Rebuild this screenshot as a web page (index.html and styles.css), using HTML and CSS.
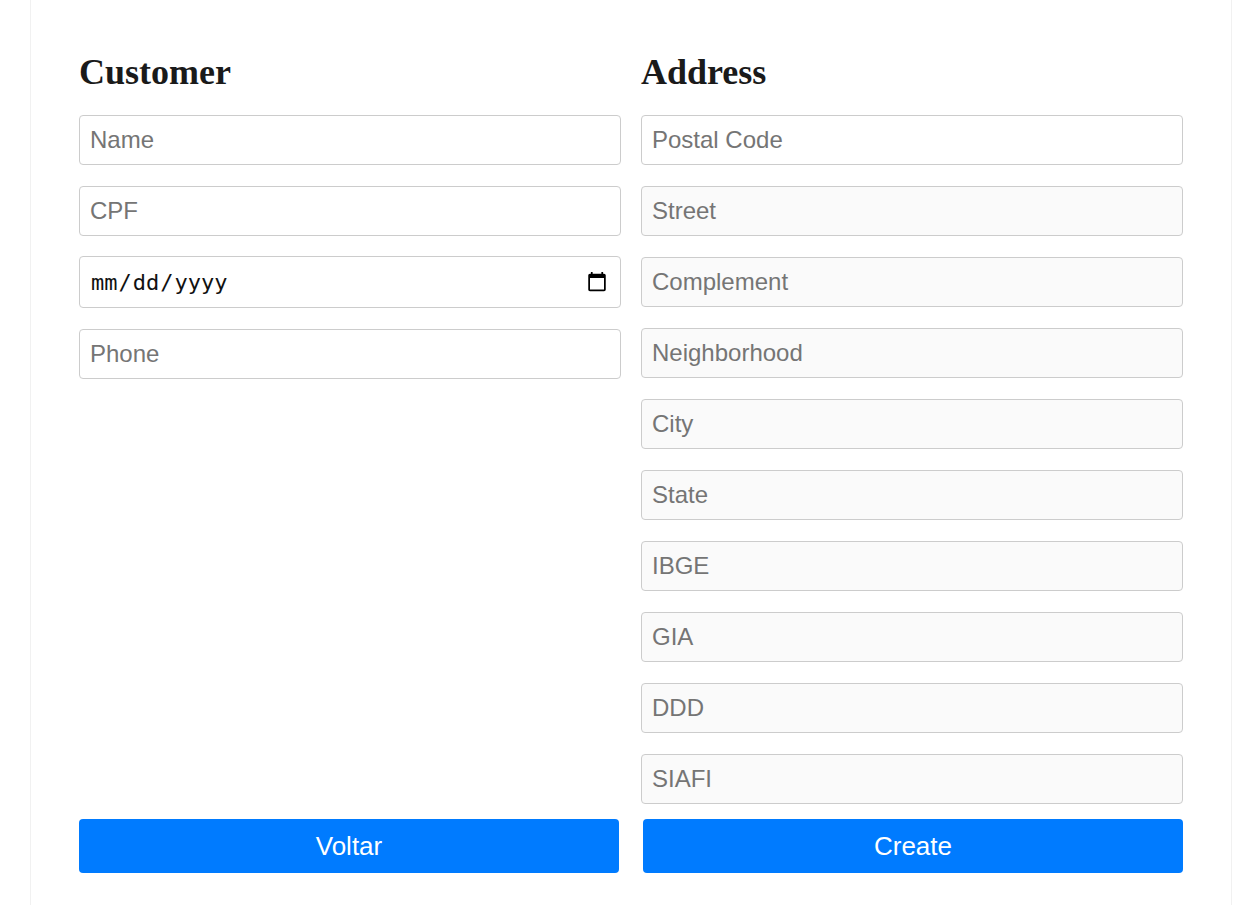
FILE: index.html
```html
<!DOCTYPE html>
<html lang="en">
<head>
<meta charset="utf-8">
<title>Create Customer</title>
<link rel="stylesheet" href="styles.css">
</head>
<body>
<div class="container">
  <form class="form">
    <div class="columns">
      <section class="col">
        <h1 class="title">Customer</h1>
        <input class="field" type="text" placeholder="Name">
        <input class="field" type="text" placeholder="CPF">
        <input class="field date" type="date">
        <input class="field" type="text" placeholder="Phone">
      </section>
      <section class="col">
        <h1 class="title">Address</h1>
        <input class="field" type="text" placeholder="Postal Code">
        <input class="field ro" type="text" placeholder="Street" readonly>
        <input class="field ro" type="text" placeholder="Complement" readonly>
        <input class="field ro" type="text" placeholder="Neighborhood" readonly>
        <input class="field ro" type="text" placeholder="City" readonly>
        <input class="field ro" type="text" placeholder="State" readonly>
        <input class="field ro" type="text" placeholder="IBGE" readonly>
        <input class="field ro" type="text" placeholder="GIA" readonly>
        <input class="field ro" type="text" placeholder="DDD" readonly>
        <input class="field ro" type="text" placeholder="SIAFI" readonly>
      </section>
    </div>
    <div class="actions">
      <button type="button" class="btn">Voltar</button>
      <button type="button" class="btn">Create</button>
    </div>
  </form>
</div>
</body>
</html>
```

FILE: styles.css
```css
html, body {
  margin: 0;
  padding: 0;
  background: #ffffff;
}

body {
  font-family: "Liberation Serif", "Times New Roman", serif;
}

.container {
  box-sizing: border-box;
  width: 1202px;
  margin-left: 30px;
  min-height: 905px;
  padding: 48px 48px 30px;
  border-left: 1px solid #f1f1f1;
  border-right: 1px solid #f1f1f1;
}

.columns {
  display: grid;
  grid-template-columns: 1fr 1fr;
  column-gap: 20px;
  align-items: start;
}

.col {
  display: flex;
  flex-direction: column;
  gap: 21px;
}

.title {
  margin: 4px 0 2px;
  font-family: "Liberation Serif", "Times New Roman", serif;
  font-size: 36px;
  font-weight: bold;
  line-height: 40px;
  color: #1a1a1a;
}

.field {
  box-sizing: border-box;
  display: block;
  width: 100%;
  height: 50px;
  margin: 0;
  padding: 10px 10px;
  border: 1px solid #cccccc;
  border-radius: 4px;
  background: #ffffff;
  font-family: "Liberation Sans", Arial, sans-serif;
  font-size: 24px;
  color: #222222;
  outline: none;
}

.field::placeholder {
  color: #757575;
  opacity: 1;
}

.field.ro {
  background: #fafafa;
}

.field.date {
  height: 52px;
  margin-top: -1px;
  font-family: "DejaVu Sans Mono", monospace;
  font-size: 22px;
  color: #111111;
}

.actions {
  display: flex;
  gap: 24px;
  margin-top: 15px;
}

.btn {
  flex: 1;
  height: 54px;
  margin: 0;
  padding: 0;
  border: none;
  border-radius: 4px;
  background: #007bff;
  color: #ffffff;
  font-family: "Liberation Sans", Arial, sans-serif;
  font-size: 26px;
  cursor: pointer;
}
```
